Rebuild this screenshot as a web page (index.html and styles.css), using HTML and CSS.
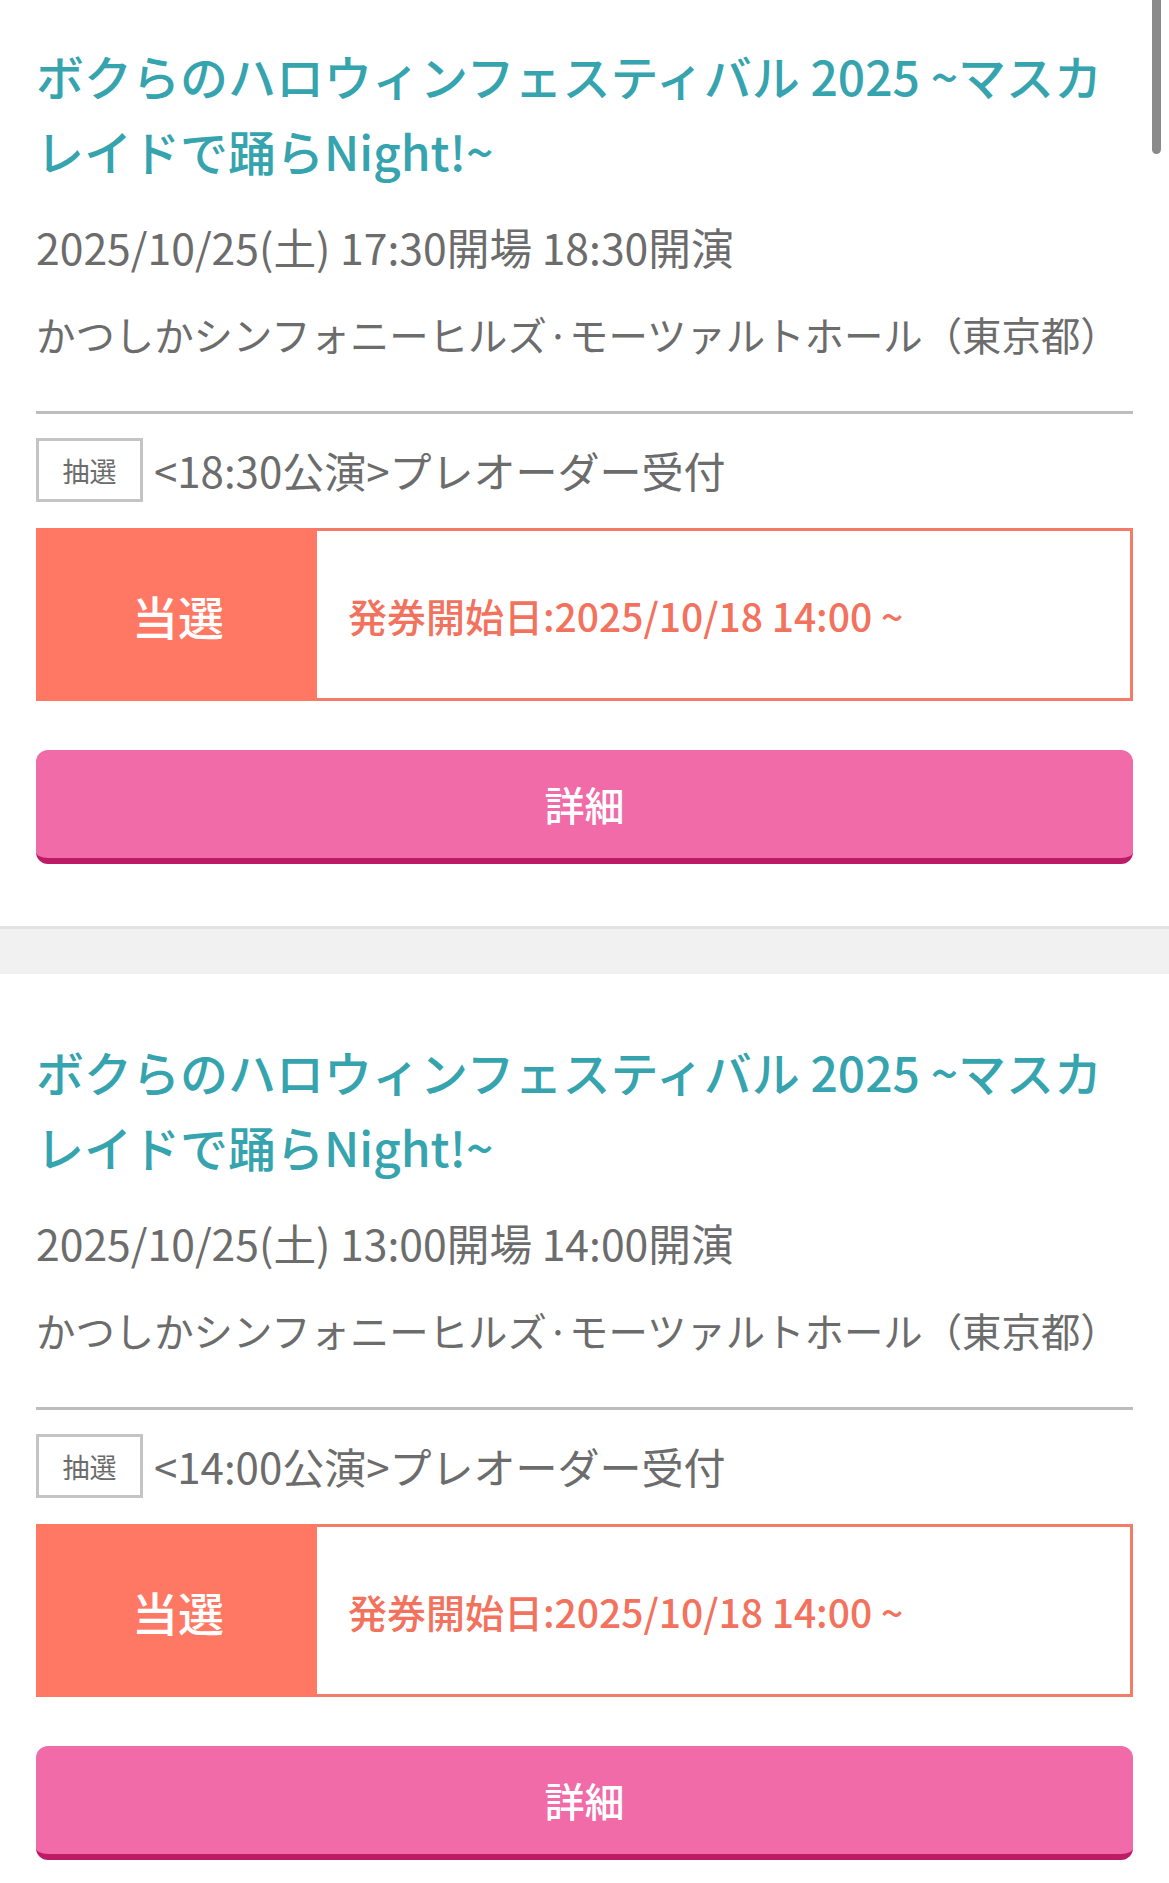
FILE: index.html
```html
<!DOCTYPE html>
<html lang="ja">
<head>
<meta charset="utf-8">
<title>プレオーダー受付</title>
<link rel="stylesheet" href="styles.css">
</head>
<body>
<div class="list">
  <section class="card">
    <h2 class="title">ボクらのハロウィンフェスティバル 2025 ~マスカレイドで踊らNight!~</h2>
    <p class="info date">2025/10/25(土) 17:30開場 18:30開演</p>
    <p class="info venue">かつしかシンフォニーヒルズ·モーツァルトホール（東京都）</p>
    <hr class="divider">
    <div class="entry">
      <span class="tag">抽選</span>
      <span class="entry-name">&lt;18:30公演&gt;プレオーダー受付</span>
    </div>
    <div class="status">
      <div class="status-label">当選</div>
      <div class="status-text">発券開始日:2025/10/18 14:00 ~</div>
    </div>
    <a class="detail-btn" href="#">詳細</a>
  </section>
  <div class="gap"></div>
  <section class="card">
    <h2 class="title">ボクらのハロウィンフェスティバル 2025 ~マスカレイドで踊らNight!~</h2>
    <p class="info date">2025/10/25(土) 13:00開場 14:00開演</p>
    <p class="info venue">かつしかシンフォニーヒルズ·モーツァルトホール（東京都）</p>
    <hr class="divider">
    <div class="entry">
      <span class="tag">抽選</span>
      <span class="entry-name">&lt;14:00公演&gt;プレオーダー受付</span>
    </div>
    <div class="status">
      <div class="status-label">当選</div>
      <div class="status-text">発券開始日:2025/10/18 14:00 ~</div>
    </div>
    <a class="detail-btn" href="#">詳細</a>
  </section>
</div>
<div class="scroll-thumb"></div>
</body>
</html>
```
FILE: styles.css
```css
html, body {
  margin: 0;
  padding: 0;
  background: #ffffff;
}
body {
  font-family: "Noto Sans CJK JP", "Noto Sans", sans-serif;
  color: #6c6c6c;
  overflow: hidden;
  height: 1883px;
  position: relative;
}
.list {
  margin-top: -22px;
}
.card {
  padding: 60px 36px 62px;
  background: #fff;
}
.title {
  margin: 0;
  font-size: 48px;
  line-height: 75px;
  font-weight: 500;
  color: #35a4ae;
}
.info {
  margin: 28px 0 0;
  font-size: 40px;
  line-height: 60px;
  color: #6c6c6c;
}
.info.date {
  font-size: 42.7px;
}
.info.venue {
  margin-top: 28px;
  font-size: 39.4px;
}
.divider {
  margin: 47px 0 0;
  border: 0;
  height: 3px;
  background: #bdbdbd;
}
.entry {
  margin-top: 24px;
  display: flex;
  align-items: center;
  gap: 11px;
  height: 64px;
}
.tag {
  box-sizing: border-box;
  width: 107px;
  height: 64px;
  border: 3px solid #c4c4c4;
  display: flex;
  align-items: center;
  justify-content: center;
  font-size: 27px;
  color: #6c6c6c;
}
.entry-name {
  font-size: 42px;
  line-height: 60px;
  color: #6c6c6c;
}
.status {
  margin-top: 26px;
  box-sizing: border-box;
  height: 173px;
  border: 3px solid #f37b68;
  display: flex;
  align-items: stretch;
}
.status-label {
  width: 278px;
  margin: -3px 0 -3px -3px;
  padding-left: 3px;
  background: #ff7864;
  color: #fff;
  font-size: 46px;
  font-weight: 500;
  display: flex;
  align-items: center;
  justify-content: center;
}
.status-text {
  display: flex;
  align-items: center;
  padding-left: 31px;
  font-size: 39px;
  font-weight: 500;
  color: #f2725e;
}
.detail-btn {
  margin-top: 49px;
  display: flex;
  align-items: center;
  justify-content: center;
  box-sizing: border-box;
  height: 114px;
  border-radius: 12px;
  background: #f06ba8;
  border-bottom: 6px solid #bd1b66;
  color: #fff;
  font-size: 40px;
  font-weight: 500;
  text-decoration: none;
}
.gap {
  height: 45px;
  background: #f1f1f1;
  border-top: 3px solid #e2e2e2;
}
.scroll-thumb {
  position: absolute;
  top: 0;
  left: 1152px;
  width: 9px;
  height: 154px;
  background: #8a8a8a;
  border-radius: 0 0 5px 5px;
}
```
